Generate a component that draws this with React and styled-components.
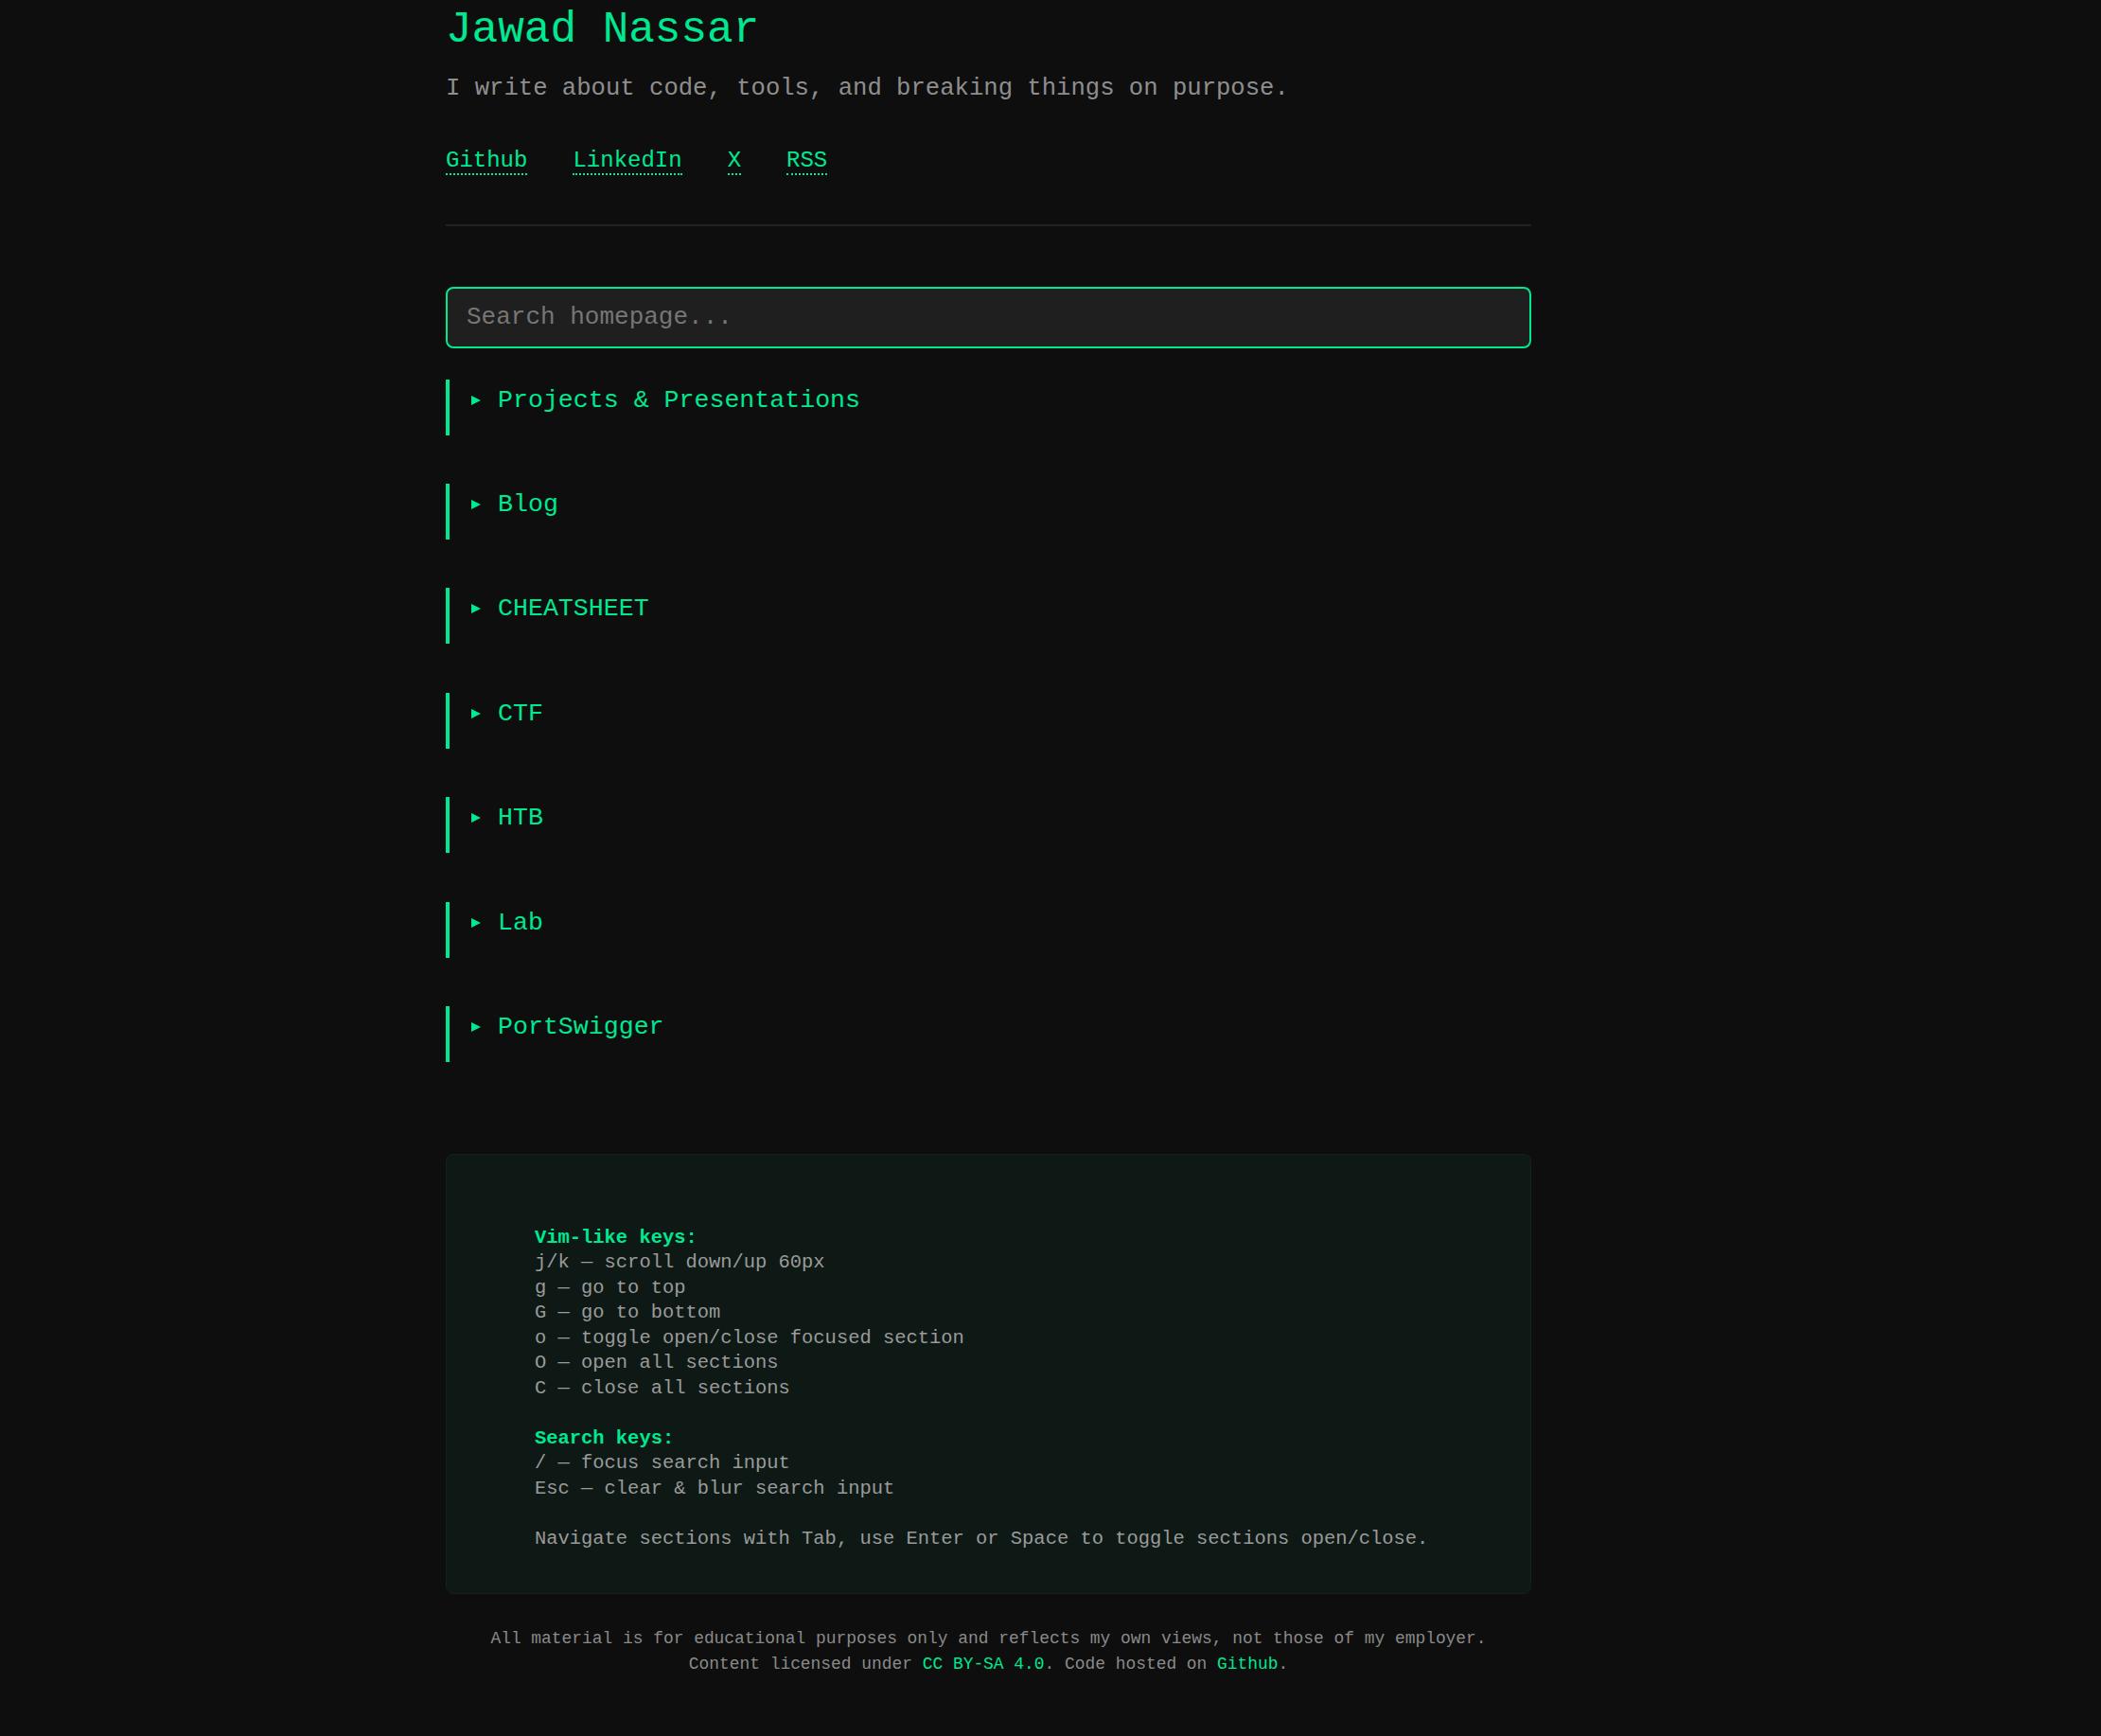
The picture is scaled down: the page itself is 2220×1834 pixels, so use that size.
import React from 'react'
import styled, { createGlobalStyle } from 'styled-components'

const GREEN = '#00e890'

const GlobalStyle = createGlobalStyle`
  html, body {
    margin: 0;
    padding: 0;
    background: #0e0e0e;
  }
  body {
    font-family: "Liberation Mono", "DejaVu Sans Mono", monospace;
    color: #8c8c8c;
  }
  * {
    box-sizing: border-box;
  }
`

const Page = styled.div`
  min-height: 1834px;
  padding: 5px 0 40px 471px;
`

const Main = styled.main`
  width: 1147px;
`

const Title = styled.h1`
  margin: 0;
  font-size: 46px;
  line-height: 1.2;
  font-weight: normal;
  color: ${GREEN};
`

const Tagline = styled.p`
  margin: 15px 0 0;
  font-size: 25.6px;
  line-height: 1.5;
  color: #8e8e8e;
`

const Links = styled.nav`
  display: flex;
  gap: 48px;
  margin-top: 38px;
  font-size: 24px;
  line-height: 36px;
`

const NavLink = styled.a`
  color: ${GREEN};
  text-decoration: none;
  border-bottom: 2px dotted ${GREEN};
`

const Rule = styled.hr`
  margin: 49px 0 0;
  border: none;
  height: 2px;
  background: #222;
`

const Search = styled.input`
  display: block;
  width: 100%;
  height: 65px;
  margin-top: 64px;
  padding: 0 20px;
  background: #1f1f1f;
  border: 2px solid ${GREEN};
  border-radius: 8px;
  color: #ccc;
  font-family: inherit;
  font-size: 26px;
  outline: none;

  &::placeholder {
    color: #767676;
  }
`

const Sections = styled.div`
  display: flex;
  flex-direction: column;
  gap: 51.4px;
  margin-top: 33px;
`

const Section = styled.details`
  border-left: 4px solid ${GREEN};
  padding: 2px 0 17px 23px;
`

const Summary = styled.summary`
  display: flex;
  align-items: center;
  gap: 18px;
  height: 40px;
  list-style: none;
  cursor: pointer;
  font-size: 26.6px;
  color: ${GREEN};

  &::-webkit-details-marker {
    display: none;
  }
`

const Caret = styled.span`
  width: 0;
  height: 0;
  border-left: 10px solid ${GREEN};
  border-top: 5px solid transparent;
  border-bottom: 5px solid transparent;
`

const Help = styled.aside`
  margin-top: 97px;
  padding: 75px 93px 44px;
  background: #0e1915;
  border: 1px solid #14211c;
  border-radius: 8px;
  font-size: 20.45px;
  line-height: 26.5px;
  color: #9a9a9a;
`

const HelpHead = styled.div`
  color: ${GREEN};
  font-weight: bold;
`

const HelpLine = styled.div`
  min-height: 26.5px;
  white-space: pre;
`

const Footer = styled.footer`
  margin-top: 34px;
  text-align: center;
  font-size: 17.9px;
  line-height: 27px;
  color: #8a8a8a;

  a {
    color: ${GREEN};
    text-decoration: none;
  }
`

const sections = [
  'Projects & Presentations',
  'Blog',
  'CHEATSHEET',
  'CTF',
  'HTB',
  'Lab',
  'PortSwigger',
]

const vimKeys = [
  'j/k — scroll down/up 60px',
  'g — go to top',
  'G — go to bottom',
  'o — toggle open/close focused section',
  'O — open all sections',
  'C — close all sections',
]

const searchKeys = ['/ — focus search input', 'Esc — clear & blur search input']

const App = () => (
  <>
    <GlobalStyle />
    <Page>
      <Main>
        <Title>Jawad Nassar</Title>
        <Tagline>I write about code, tools, and breaking things on purpose.</Tagline>
        <Links>
          <span><NavLink href="#">Github</NavLink></span>
          <span><NavLink href="#">LinkedIn</NavLink></span>
          <span><NavLink href="#">X</NavLink></span>
          <span><NavLink href="#">RSS</NavLink></span>
        </Links>
        <Rule />

        <Search type="text" placeholder="Search homepage..." />

        <Sections>
          {sections.map((name) => (
            <Section key={name}>
              <Summary>
                <Caret />
                {name}
              </Summary>
            </Section>
          ))}
        </Sections>

        <Help>
          <HelpHead>Vim-like keys:</HelpHead>
          {vimKeys.map((l) => (
            <HelpLine key={l}>{l}</HelpLine>
          ))}
          <HelpLine />
          <HelpHead>Search keys:</HelpHead>
          {searchKeys.map((l) => (
            <HelpLine key={l}>{l}</HelpLine>
          ))}
          <HelpLine />
          <HelpLine>Navigate sections with Tab, use Enter or Space to toggle sections open/close.</HelpLine>
        </Help>

        <Footer>
          <div>All material is for educational purposes only and reflects my own views, not those of my employer.</div>
          <div>
            Content licensed under <a href="#">CC BY-SA 4.0</a>. Code hosted on <a href="#">Github</a>.
          </div>
        </Footer>
      </Main>
    </Page>
  </>
)

export default App
